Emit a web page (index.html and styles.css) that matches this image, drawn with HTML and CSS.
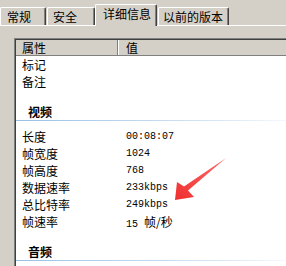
FILE: index.html
```html
<!DOCTYPE html>
<html lang="zh-CN">
<head>
  <meta charset="UTF-8">
  <title>属性 - 详细信息</title>
  <link rel="stylesheet" href="styles.css">
</head>
<body>

  <!-- Tab strip -->
  <div class="tabs">
    <div class="tab tab-general">常规</div>
    <div class="tab tab-security">安全</div>
    <div class="tab tab-details active">详细信息</div>
    <div class="tab tab-versions">以前的版本</div>
  </div>

  <!-- Details panel -->
  <div class="panel">
    <div class="list">
      <div class="list-inner">
        <div class="list-head">
          <div class="head-name">属性</div>
          <div class="head-value">值</div>
        </div>

        <div class="row"><span class="name">标记</span><span class="value"></span></div>
        <div class="row"><span class="name">备注</span><span class="value"></span></div>

        <div class="group">视频</div>
        <div class="row"><span class="name">长度</span><span class="value">00:08:07</span></div>
        <div class="row"><span class="name">帧宽度</span><span class="value">1024</span></div>
        <div class="row"><span class="name">帧高度</span><span class="value">768</span></div>
        <div class="row"><span class="name">数据速率</span><span class="value">233kbps</span></div>
        <div class="row"><span class="name">总比特率</span><span class="value">249kbps</span></div>
        <div class="row"><span class="name">帧速率</span><span class="value">15 <span class="cjk">帧/秒</span></span></div>

        <div class="group">音频</div>
      </div>
    </div>
  </div>

  <!-- Red annotation arrow drawn over the list -->
  <svg class="arrow" width="286" height="266" viewBox="0 0 286 266">
    <defs>
      <linearGradient id="arrowFill" x1="1" y1="0" x2="0" y2="1">
        <stop offset="0" stop-color="#ff6a6a"/>
        <stop offset="1" stop-color="#ef2f2f"/>
      </linearGradient>
    </defs>
    <polygon points="175,200 177,182 184,186.5 226,158 188,190.5 194,197" fill="url(#arrowFill)"/>
  </svg>

</body>
</html>
```

FILE: styles.css
```css
/* Reset */
* {
  margin: 0;
  padding: 0;
  box-sizing: border-box;
}

body {
  width: 286px;
  height: 266px;
  overflow: hidden;
  position: relative;
  background: #d4d0c8;
  color: #000;
  font-family: "Noto Sans CJK SC", "Noto Sans", sans-serif;
  font-size: 12px;
}

/* Tabs */
.tabs {
  display: flex;
  align-items: flex-end;
  height: 25px;
  position: relative;
  z-index: 2;
}

.tab {
  height: 18px;
  line-height: 16px;
  padding-top: 1px;
  background: #d4d0c8;
  border-top: 1px solid #fff;
  border-left: 1px solid #fff;
  border-right: 1px solid #404040;
  box-shadow: inset -1px 0 0 #808080;
  border-top-left-radius: 2px;
  border-top-right-radius: 2px;
  white-space: nowrap;
}

.tab-general {
  width: 46px;
  padding-left: 6px;
}

.tab-security {
  width: 48px;
  margin-left: 1px;
  padding-left: 5px;
}

.tab-details {
  width: 62px;
  padding-left: 7px;
}

.tab-versions {
  width: 71px;
  margin-left: 1px;
  padding-left: 4px;
}

.tab.active {
  height: 22px;
  margin-bottom: -1px;
  padding-top: 1px;
}

/* Panel */
.panel {
  border-top: 1px solid #fff;
  padding: 12px 0 0 14px;
}

.list {
  border-top: 1px solid #808080;
  border-left: 1px solid #808080;
}

.list-inner {
  background: #fff;
  border-top: 1px solid #404040;
  border-left: 1px solid #404040;
  height: 240px;
}

.list-head {
  display: flex;
  height: 16px;
  line-height: 15px;
  background: #d4d0c8;
  border-bottom: 1px solid #808080;
}

.head-name {
  width: 102px;
  padding-left: 6px;
  border-right: 1px solid #808080;
}

.head-value {
  flex: 1;
  padding-left: 7px;
  border-left: 1px solid #fff;
}

/* Rows */
.row {
  display: flex;
  height: 17px;
  line-height: 17px;
}

.name {
  width: 104px;
  padding-left: 6px;
}

.value {
  padding-left: 6px;
  font-family: "Liberation Mono", monospace;
  font-size: 10px;
}

.value .cjk {
  font-family: "Noto Sans CJK SC", sans-serif;
  font-size: 12px;
}

/* Group headers */
.group {
  position: relative;
  margin-top: 13px;
  margin-bottom: 7px;
  padding-left: 12px;
  height: 18px;
  line-height: 17px;
  font-weight: bold;
}

.group::after {
  content: '';
  position: absolute;
  left: 0;
  right: 0;
  bottom: 0;
  height: 1px;
  background: linear-gradient(to right, #98c0e6, #d8e6f4 75%, #f4f8fc);
}

/* Annotation */
.arrow {
  position: absolute;
  top: 0;
  left: 0;
  z-index: 5;
}
```
